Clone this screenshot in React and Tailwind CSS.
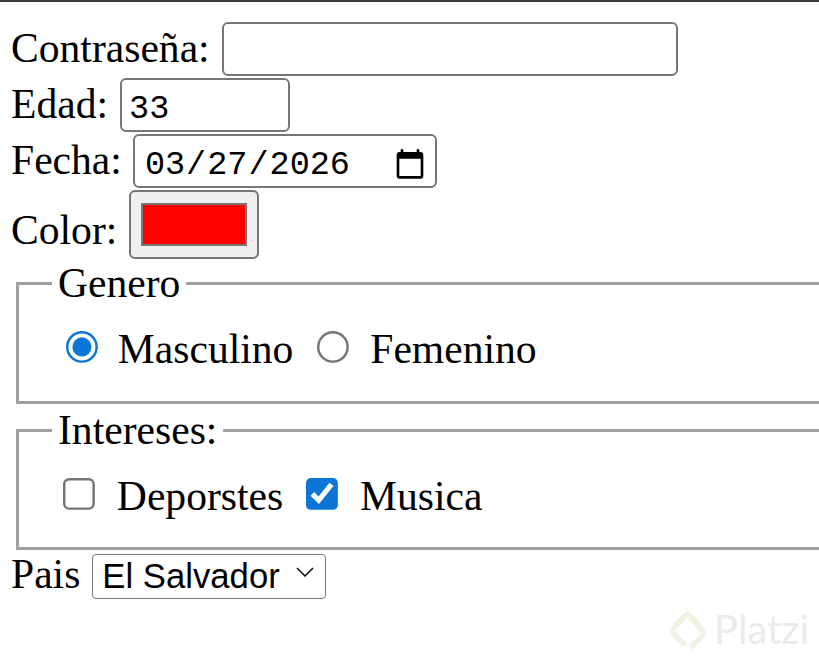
export default function App() {
  return (
    <div className="relative h-[660px] w-[819px] overflow-hidden border-t-2 border-[#3a3a3a] bg-white pl-[11px] font-['Liberation_Serif',serif] text-[41.6px] leading-[normal] text-black">
      <div className="flex flex-col gap-[2px] pt-[20px]">
        <div className="flex h-[54px] items-baseline gap-[12px]">
          <label>Contraseña:</label>
          <input type="password" className="h-[54px] w-[456px] rounded-[6px] border-2 border-[#767676] px-[9px] pt-[8px] font-['Liberation_Mono',monospace] text-[33.5px]" />
        </div>
        <div className="flex h-[54px] items-baseline gap-[12px]">
          <label>Edad:</label>
          <input type="number" defaultValue="33" className="h-[54px] w-[170px] rounded-[6px] border-2 border-[#767676] px-[7px] pt-[8px] font-['Liberation_Mono',monospace] text-[33.5px]" />
        </div>
        <div className="flex h-[54px] items-baseline gap-[11px]">
          <label>Fecha:</label>
          <input type="date" defaultValue="2026-03-27" className="h-[54px] w-[304px] rounded-[6px] border-2 border-[#767676] pl-[9px] pr-[6px] pt-[8px] font-['Liberation_Mono',monospace] text-[33.5px]" />
        </div>
        <div className="flex h-[69px] items-end gap-[12px]">
          <label className="mb-[5px]">Color:</label>
          <input type="color" defaultValue="#ff0000" className="h-[69px] w-[130px] rounded-[6px] border-2 border-[#767676] bg-[#efefef] px-[10px] py-[11px] [&::-webkit-color-swatch-wrapper]:p-0 [&::-webkit-color-swatch]:rounded-none [&::-webkit-color-swatch]:border-2 [&::-webkit-color-swatch]:border-[#777777]" />
        </div>
      </div>

      <fieldset className="ml-[5px] w-[900px] border-[3px] border-[#a0a0a0] pb-[28px] pl-[33px] pt-[18px]">
        <legend className="px-[6px]">Genero</legend>
        <div className="flex items-baseline">
          <input type="radio" name="genero" defaultChecked className="mb-[1.2px] ml-[5.7px] accent-[#0c75d6] [zoom:2.45]" />
          <label className="ml-[20px]">Masculino</label>
          <input type="radio" name="genero" className="mb-[1.2px] ml-[9.8px] accent-[#0c75d6] [zoom:2.45]" />
          <label className="ml-[21px]">Femenino</label>
        </div>
      </fieldset>

      <fieldset className="ml-[5px] mt-[2px] w-[900px] border-[3px] border-[#a0a0a0] pb-[27px] pl-[33px] pt-[18px]">
        <legend className="px-[6px]">Intereses:</legend>
        <div className="flex items-baseline">
          <input type="checkbox" className="mb-[1.2px] ml-[4.5px] accent-[#0c75d6] [zoom:2.45]" />
          <label className="ml-[22px]">Deporstes</label>
          <input type="checkbox" defaultChecked className="mb-[1.2px] ml-[9.4px] accent-[#0c75d6] [zoom:2.45]" />
          <label className="ml-[22px]">Musica</label>
        </div>
      </fieldset>

      <div className="flex items-baseline gap-[12px]">
        <label>Pais</label>
        <div className="relative">
          <select defaultValue="sv" className="h-[45px] w-[234px] appearance-none rounded-[4px] border-[1.5px] border-[#767676] pl-[9px] pr-[40px] font-['Liberation_Sans',sans-serif] text-[34.7px]">
            <option value="sv">El Salvador</option>
            <option value="gt">Guatemala</option>
            <option value="hn">Honduras</option>
          </select>
          <svg className="pointer-events-none absolute right-[12px] top-[17px]" width="18" height="10" viewBox="0 0 18 10" fill="none">
            <polyline points="1,1 9,9 17,1" stroke="#111" strokeWidth="1.6" />
          </svg>
        </div>
      </div>

      {/* marca de agua */}
      <div className="absolute bottom-[8px] right-[10px] flex items-center gap-[6px]">
        <svg width="40" height="46" viewBox="0 0 40 46" fill="none">
          <path d="M24 40 L34 30 Q37 27 34 24 L22 10 Q20 7 17 10 L6 22 Q3 25 6 28 L16 38" stroke="#eef4e3" strokeWidth="6" strokeLinecap="round" strokeLinejoin="round" />
        </svg>
        <span className="font-['Lato',sans-serif] text-[40px] leading-none text-[#ebebeb]">Platzi</span>
      </div>
    </div>
  );
}
